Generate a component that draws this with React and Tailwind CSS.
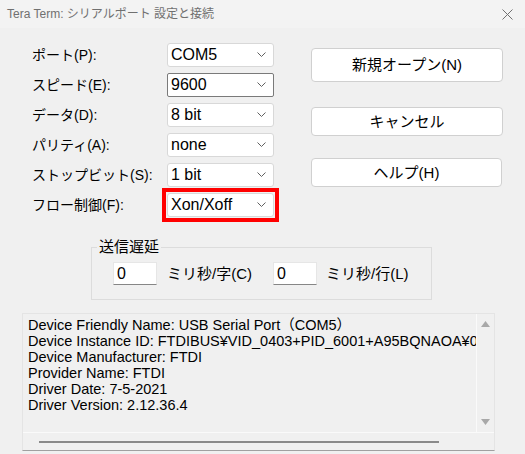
import React from 'react';

const Chevron = () => (
  <svg width="9" height="6" viewBox="0 0 9 6" className="shrink-0">
    <path d="M0.5 0.5 L4.5 4.5 L8.5 0.5" fill="none" stroke="#606060" strokeWidth="1" />
  </svg>
);

const Select = ({ value, focused }) => (
  <div
    className={`h-[24px] bg-white flex items-center justify-between pl-[3px] pr-[7px] text-[16px] leading-[20px] text-black ${
      focused ? 'border border-[#7a7a7a] rounded-[2px]' : 'border border-[#d8d8d8] rounded-[3px]'
    }`}
  >
    <span>{value}</span>
    <Chevron />
  </div>
);

const rows = [
  { label: 'ポート(P):', value: 'COM5' },
  { label: 'スピード(E):', value: '9600', focused: true },
  { label: 'データ(D):', value: '8 bit' },
  { label: 'パリティ(A):', value: 'none' },
  { label: 'ストップビット(S):', value: '1 bit' },
  { label: 'フロー制御(F):', value: 'Xon/Xoff', marked: true },
];

const info = [
  'Device Friendly Name: USB Serial Port（COM5）',
  'Device Instance ID: FTDIBUS¥VID_0403+PID_6001+A95BQNAOA¥0000',
  'Device Manufacturer: FTDI',
  'Provider Name: FTDI',
  'Driver Date: 7-5-2021',
  'Driver Version: 2.12.36.4',
];

export default function App() {
  return (
    <div className="w-[525px] h-[454px] bg-[#f0f0f0] overflow-hidden font-['Liberation_Sans','Noto_Sans_CJK_JP',sans-serif] text-black">
      {/* title bar */}
      <div className="h-[28px] bg-[#f3f3f3] flex items-center justify-between pl-[7px] pr-[12px]">
        <span className="text-[12px] leading-[16px] text-[#707070]">Tera Term: シリアルポート 設定と接続</span>
        <svg width="11" height="11" viewBox="0 0 11 11">
          <path d="M0.5 0.5 L10.5 10.5 M10.5 0.5 L0.5 10.5" stroke="#707070" strokeWidth="1" />
        </svg>
      </div>

      {/* settings + buttons */}
      <div className="flex pt-[15px]">
        <div className="ml-[32px] grid grid-cols-[135px_107px] gap-y-[6px]">
          {rows.map((r) => (
            <React.Fragment key={r.label}>
              <div className="h-[24px] flex items-center text-[14px] leading-[20px]">{r.label}</div>
              <div className="relative">
                <Select value={r.value} focused={r.focused} />
                {r.marked && <div className="absolute -inset-[5px] border-[4px] border-[#ff0000]" />}
              </div>
            </React.Fragment>
          ))}
        </div>
        <div className="ml-[37px] w-[192px] pt-[5px] flex flex-col text-[15px] leading-[20px]">
          <button className="h-[34px] bg-white border border-[#d0d0d0] rounded-[4px]">新規オープン(N)</button>
          <button className="mt-[25px] h-[29px] bg-white border border-[#d0d0d0] rounded-[4px]">キャンセル</button>
          <button className="mt-[22px] h-[29px] bg-white border border-[#d0d0d0] rounded-[4px] w-[191px]">ヘルプ(H)</button>
        </div>
      </div>

      {/* transmit delay */}
      <fieldset className="ml-[91px] mt-[20px] w-[341px] border border-[#dcdcdc] pl-[21px] pt-[5px] pb-[14px]">
        <legend className="-ml-[16px] px-[2px] text-[15px] leading-[20px]">送信遅延</legend>
        <div className="flex items-center text-[15px] leading-[20px]">
          <div className="w-[44px] h-[23px] bg-white border border-[#e6e6e6] border-b-[#868686] pl-[3px] flex items-center text-[16px]">0</div>
          <span className="ml-[10px] w-[106px]">ミリ秒/字(C)</span>
          <div className="w-[44px] h-[23px] bg-white border border-[#e6e6e6] border-b-[#868686] pl-[3px] flex items-center text-[16px]">0</div>
          <span className="ml-[9px]">ミリ秒/行(L)</span>
        </div>
      </fieldset>

      {/* device info */}
      <div className="ml-[22px] mt-[13px] w-[473px] h-[138px] border border-[#e4e4e4] border-b-[#a0a0a0] flex flex-col">
        <div className="flex flex-1 min-h-0">
          <div className="flex-1 min-w-0 overflow-hidden pl-[5px] pt-[3px] text-[14.5px] leading-[16px] whitespace-nowrap border-r border-[#fafafa]">
            {info.map((l) => (
              <div key={l}>{l}</div>
            ))}
          </div>
          <div className="w-[17px] flex flex-col items-center justify-between py-[7px]">
            <svg width="9" height="6" viewBox="0 0 9 6"><path d="M0 6 L4.5 0 L9 6 Z" fill="#a8a8a8" /></svg>
            <svg width="9" height="6" viewBox="0 0 9 6"><path d="M0 0 L4.5 6 L9 0 Z" fill="#a8a8a8" /></svg>
          </div>
        </div>
        <div className="h-[18px] flex items-center pl-[16px] border-t border-[#fafafa]">
          <div className="w-[400px] h-[2px] bg-[#8a8a8a]" />
        </div>
      </div>
    </div>
  );
}
